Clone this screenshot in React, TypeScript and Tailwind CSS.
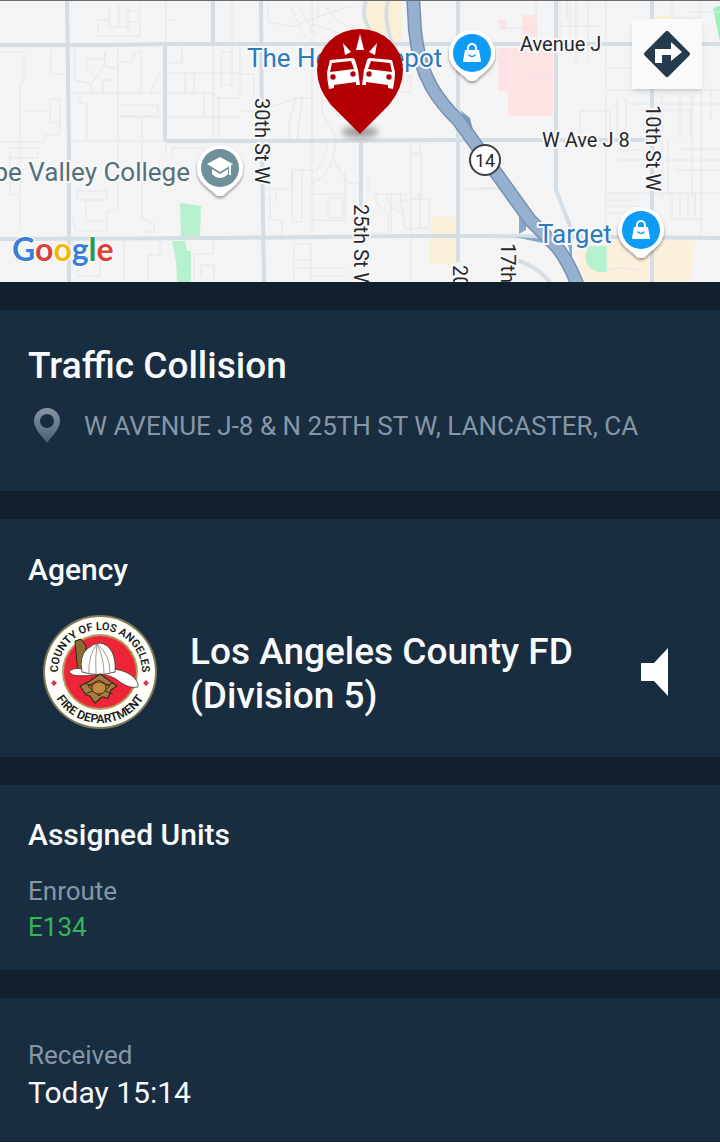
import React from "react";

const mapFont = "Roboto, 'Noto Sans', sans-serif";

// Local streets, drawn as hairlines under the main roads
const smallRoads = [
  "M109 5V27M98 20H109M98 20V36H140M119 5V27M128 5V36M140 5V36M109 27H128M128 11H140M128 22H140",
  "M0 52H24V82H20V231M51 50V74H64M0 142H43L46 135H60V115M24 111H50M50 99H60V123H50ZM10 148H38V158H10ZM10 158V195H20",
  "M75 48V80L91 84M87 59H103L106 50M87 59V70L95 76M91 92V84L104 66L106 50M104 66L116 69M103 92V80H116M118 48V140M118 62H132L135 52H142M141 52V92M151 92L153 86L160 73",
  "M73 93H165M80 93V103H87V139M69 141H165M120 105H158V116H120M120 117H165M142 117V139M118 142V208L107 212V231H76L72 218M77 191H107V200H77ZM86 200V221H107M142 142V218L154 224V232H145M77 270V276H100V245M124 240V282M148 282V255H160V240",
  "M166 0V45M168 20H174M166 63H182V46M166 73H240M213 46V140M185 73V93M194 73V93M166 93H213L219 98V140M204 93V117M166 117H240M213 98H240M232 0V86M232 52H221V85H232M240 45V97M166 142V155M172 155V148H205V155M194 282V254H213V240M201 277V265H214V282",
  "M268 3V22L292 27L315 18L350 6M290 6L306 38M298 5L316 36M324 5C336 22 348 28 356 30M312 24C326 28 340 31 348 44M312 0V140M318 0V18",
  "M240 74H254V98M240 111H258M266 108L280 104L296 98H310M296 98L289 122V139M302 98L297 139M322 46V110C325 120 332 126 336 140M312 76V240M326 100L340 118",
  "M266 189H292V170H311M292 171V222H302V170M311 183C324 180 334 165 336 141M311 173C324 168 327 150 327 141M334 160L347 183H361M312 194H344M328 198V218H343V198ZM345 172V221L312 220M270 189V219L282 221V240M276 190V200H266",
  "M294 244H311V282M294 244V282M294 268H344V276H311M294 260H311M368 176V194M374 194H411M376 194V203L388 213V233H372M386 194C388 205 395 210 405 215M400 200H411L420 194M391 194V233M400 194L405 229L429 228V199H411",
  "M411 142V282M411 153H421V199H411M420 142V153M400 76H411V92H400M458 189H500M420 228V194",
  "M500 28H540M526 78L552 76M536 0V40M560 0V42M567 0V20M570 0V40M560 26H600M576 0V62M588 0V62M606 0V90M606 68H632M580 111H610V140M580 111V138M606 92V240M606 90H720M628 104H720",
  "M617 100V138M626 98V140M640 110H691V138M662 95V200M680 93V140M692 95V198M701 90V236M711 90V120M668 140V195M617 150H658M617 160H680M606 193H720M606 200H640M606 206H640M606 213H640M672 193V219H702M680 193V216M688 193V216M695 193V216",
  "M672 0V18H700V0M680 16V45M690 12H720M640 28H632M700 40V20M676 170H720M676 160H720M680 149H720M606 228V270L622 268L640 270M500 160V190M480 188H520",
];

const mainRoads = [
  "M67 0L69 150V282",
  "M0 45L110 45L166 44L720 44",
  "M213 0V44",
  "M165 45V139Q165 141 169 141L240 141L458 140H660",
  "M261 0L262 150L264 282",
  "M361 141V237",
  "M458 0V262",
  "M556 0V190L570 226V237",
  "M652 0V282",
  "M0 239L220 238L410 236L480 236L600 237L720 238",
  "M366 0C362 12 364 20 370 30M388 0C384 18 388 30 392 44",
];

// Shared body for the three place pins, centred on 0,0
const PlacePin = ({
  x,
  y,
  color,
  children,
}: {
  x: number;
  y: number;
  color: string;
  children: React.ReactNode;
}) => (
  <g transform={`translate(${x} ${y})`}>
    <path
      d="M0 28C-3 28 -4 27 -7 24C-11 20 -23 14 -23 0A23 23 0 1 1 23 0C23 14 11 20 7 24C4 27 3 28 0 28Z"
      fill="#fff"
      filter="url(#pinShadow)"
    />
    <circle r="19" fill={color} />
    {children}
  </g>
);

const ShoppingBag = () => (
  <g>
    <path d="M-7 -3H7L9 8Q9 9 8 9H-8Q-9 9 -9 8Z" fill="#fff" />
    <path
      d="M-4 -2V-5A4 4 0 0 1 4 -5V-2"
      fill="none"
      stroke="#fff"
      strokeWidth="2"
    />
    <path
      d="M-3 2Q0 5 3 2"
      fill="none"
      stroke="#0f9cf7"
      strokeWidth="1.6"
      strokeLinecap="round"
    />
  </g>
);

const CollisionCar = () => (
  <g>
    <path
      d="M330 60L352 58Q354 58 355 60L358 70Q359 78 360 85H356V82L334 85V88L329 89Q327 80 327 72Z"
      fill="#fff"
    />
    <path d="M332 63L351 61L354 69L330 72Z" fill="#b20003" />
    <circle cx="333" cy="77" r="2.7" fill="#b20003" />
    <circle cx="353" cy="74" r="2.7" fill="#b20003" />
  </g>
);

const IncidentMap = () => (
  <svg
    className="block h-[282px] w-full bg-[#f4f4f5]"
    viewBox="0 0 720 282"
    preserveAspectRatio="xMidYMid slice"
    role="img"
    aria-label="Map"
  >
    <defs>
      <filter id="pinShadow" x="-30%" y="-30%" width="160%" height="170%">
        <feDropShadow dx="0" dy="2" stdDeviation="1.5" floodOpacity="0.4" />
      </filter>
      <filter id="groundShadow" x="-30%" y="-60%" width="160%" height="220%">
        <feGaussianBlur stdDeviation="3" />
      </filter>
    </defs>

    {/* Land use areas */}
    <path d="M180 203L201 206L200 236H181Z" fill="#b5f0cf" />
    <path d="M172 241H185L187 251H191V282H177Q177 260 172 241Z" fill="#b5f0cf" />
    <path d="M364 0H402V44H392L387 34L364 30Z" fill="#fbefd6" />
    <path d="M431 217H457V264H429Z" fill="#faf0d9" />
    <path
      d="M522 15H537V37H522ZM497 20H506V30H501ZM498 48H553V116H508V91H498Z"
      fill="#fde3e3"
    />
    <path d="M574 240H695L690 282H584Z" fill="#fcf0dc" />
    <path d="M590 246H607V272Q594 274 587 264Q583 252 590 246Z" fill="#b5f0cf" />
    <path d="M713 8L720 6V42Z" fill="#9ff0bd" />
    <path d="M655 16H672V20H655Z" fill="#fbefd6" />

    <g fill="none" stroke="#e4e6ea" strokeWidth="1">
      {smallRoads.map((d) => (
        <path key={d} d={d} />
      ))}
    </g>
    <g fill="none" stroke="#d5dee5" strokeWidth="4">
      {mainRoads.map((d) => (
        <path key={d} d={d} />
      ))}
    </g>
    <path
      d="M515 260Q534 264 550 282"
      fill="none"
      stroke="#d5dee5"
      strokeWidth="4"
    />

    {/* Freeway with its ramps */}
    <path
      d="M519 205L526 215V230L519 234V205ZM515 237L550 239L556 246ZM566 236H572V262Z"
      fill="#8ba7c7"
    />
    <path d="M460 110L470 118L474 134Z" fill="#7d98b9" />
    <path
      d="M413 -4L415 30Q418 62 431 86Q442 105 458 120L484 156L530 220L556 246Q568 260 578 286"
      fill="none"
      stroke="#7891b1"
      strokeWidth="14"
    />
    <path
      d="M413 -4L415 30Q418 62 431 86Q442 105 458 120L484 156L530 220L556 246Q568 260 578 286"
      fill="none"
      stroke="#96b0d0"
      strokeWidth="11"
    />

    {/* Street and place names */}
    <g
      fontFamily={mapFont}
      stroke="#f8f8f8"
      strokeWidth="4"
      strokeLinejoin="round"
      paintOrder="stroke"
    >
      <g fontSize="20" fill="#26282b">
        <text x="520" y="51">Avenue J</text>
        <text x="542" y="147">W Ave J 8</text>
        <text transform="translate(255 98) rotate(90)">30th St W</text>
        <text transform="translate(354 204) rotate(90)">25th St W</text>
        <text transform="translate(453 265) rotate(90)">20</text>
        <text transform="translate(501 243) rotate(90)">17th</text>
        <text transform="translate(646 105) rotate(90)">10th St W</text>
      </g>
      <g fontSize="26">
        <text x="247" y="67" fill="#2b7bbf">The Home Depot</text>
        <text x="538" y="243" fill="#2b7bbf">Target</text>
        <text x="190" y="181" fill="#54707b" textAnchor="end">
          pe Valley College
        </text>
      </g>
    </g>

    <circle cx="485" cy="160" r="15" fill="#fff" stroke="#3c4043" strokeWidth="2" />
    <text
      x="485"
      y="167"
      fontSize="18"
      textAnchor="middle"
      fontFamily={mapFont}
      fill="#26282b"
    >
      14
    </text>

    <PlacePin x={472} y={53} color="#0f9cf7">
      <ShoppingBag />
    </PlacePin>
    <PlacePin x={641} y={230} color="#0f9cf7">
      <ShoppingBag />
    </PlacePin>
    <PlacePin x={220} y={168} color="#6f909b">
      <path d="M-13 -4L0 -11L13 -4L0 4Z" fill="#fff" />
      <path d="M-8 1L0 6L8 1V6Q0 14 -8 6Z" fill="#fff" />
      <path d="M10 -4V7" stroke="#fff" strokeWidth="2" />
    </PlacePin>

    {/* Incident marker */}
    <ellipse
      cx="360"
      cy="132"
      rx="18"
      ry="6"
      fill="#000"
      opacity="0.35"
      filter="url(#groundShadow)"
    />
    <path
      d="M360 134L331 105Q317 88 317 70A43 41 0 0 1 403 70Q403 88 389 105Z"
      fill="#b20003"
    />
    <path
      d="M360 34L364 50H356ZM343 43L351 52L345 55ZM377 43L375 55L369 52Z"
      fill="#fff"
    />
    <CollisionCar />
    <g transform="translate(722 0) scale(-1 1)">
      <CollisionCar />
    </g>

    <text
      x="12"
      y="261"
      fontFamily="Lato, sans-serif"
      fontSize="32"
      fontWeight="700"
      stroke="#fff"
      strokeWidth="2"
      paintOrder="stroke"
    >
      <tspan fill="#3c7fd9">G</tspan>
      <tspan fill="#d9433a">o</tspan>
      <tspan fill="#f0b90a">o</tspan>
      <tspan fill="#3c7fd9">g</tspan>
      <tspan fill="#1f9d55">l</tspan>
      <tspan fill="#d9433a">e</tspan>
    </text>
    <path d="M0 0H720V1H0Z" fill="#6b6d72" />
  </svg>
);

const AgencySeal = () => (
  <svg
    className="h-[116px] w-[116px] shrink-0"
    viewBox="-58 -58 116 116"
    role="img"
    aria-label="Agency seal"
  >
    <defs>
      <path id="sealTop" d="M-41 9A42 42 0 1 1 41 9" />
      <path id="sealBottom" d="M-51 0A51 51 0 0 0 51 0" />
    </defs>
    <circle r="57" fill="#827b55" />
    <circle r="55" fill="#fffef8" />
    <circle r="38" fill="#b39c5e" />
    <circle r="36" fill="#ee2438" />
    <g
      fontFamily="Roboto, sans-serif"
      fontWeight="600"
      fill="#1b1b1b"
      textAnchor="middle"
    >
      <text fontSize="11">
        <textPath href="#sealTop" startOffset="50%">
          COUNTY OF LOS ANGELES
        </textPath>
      </text>
      <text fontSize="12">
        <textPath href="#sealBottom" startOffset="50%">
          FIRE DEPARTMENT
        </textPath>
      </text>
    </g>
    <path d="M-46 8L-43 11L-46 14L-49 11ZM46 8L49 11L46 14L43 11Z" fill="#d8344b" />
    {/* Helmet */}
    <path d="M-25 -31L-19 -33L-14 -26L-16 2H-22Z" fill="#8d6b35" stroke="#2c2214" />
    <path
      d="M-31 0Q-27 -5 -18 -3H10Q22 -3 31 3Q39 9 38 15Q30 17 20 10Q12 3 0 2Q-16 5 -27 3Z"
      fill="#fff"
      stroke="#4a3a2a"
      strokeWidth="0.8"
    />
    <path
      d="M-18 0Q-21 -16 -13 -23Q-6 -29 0 -29Q8 -28 12 -20Q16 -12 15 0Q-2 5 -18 0Z"
      fill="#fff"
      stroke="#3c3328"
      strokeWidth="0.8"
    />
    <path
      d="M-3 -28Q-12 -16 -11 1M-3 -28Q-5 -14 -4 2M-3 -28Q4 -14 4 2M-3 -28Q10 -18 10 1"
      fill="none"
      stroke="#8a8172"
      strokeWidth="0.8"
    />
    {/* Badge */}
    <path
      d="M0 2L17 14L11 18L8 26L2 25L-5 31L-10 24L-14 23L-20 14L-10 9Z"
      fill="#a57c42"
      stroke="#3b2a16"
      strokeWidth="1.2"
    />
    <path
      d="M-16 11L13 22M13 11L-15 22M-12 14L-1 8L10 14L-1 24Z"
      fill="none"
      stroke="#3b2a16"
      strokeWidth="1"
    />
    <ellipse cx="-1" cy="16" rx="7" ry="6" fill="#c08a45" stroke="#5a2b18" />
  </svg>
);

const Card = ({
  className,
  children,
}: {
  className: string;
  children: React.ReactNode;
}) => (
  <section className={`bg-[#182d40] px-7 ${className}`}>{children}</section>
);

const App = () => {
  return (
    <main className="flex min-h-screen flex-col gap-7 bg-[#12202d] font-[Roboto,sans-serif] text-[#f8fafb]">
      <div className="relative">
        <IncidentMap />
        <button
          type="button"
          aria-label="Directions"
          className="absolute top-[19px] right-[18px] flex size-[70px] items-center justify-center bg-[#fafafa]/95 shadow-md"
        >
          <svg className="size-12" viewBox="0 0 48 48">
            <path
              d="M22.500 1.600Q24 .1 25.500 1.600L46.400 22.500Q47.900 24 46.400 25.500L25.500 46.400Q24 47.900 22.500 46.400L1.600 25.500Q.1 24 1.600 22.500Z"
              fill="#263b4d"
            />
            <path d="M12 33V19H28V12L39 22L28 31V25H19V33Z" fill="#fff" />
          </svg>
        </button>
      </div>

      <Card className="pt-[33px] pb-11">
        <h1 className="text-[37px] leading-[46px] font-medium">
          Traffic Collision
        </h1>
        <div className="mt-4 flex items-center gap-5">
          <svg className="ml-1 h-9 w-8 shrink-0" viewBox="0 0 32 36">
            <defs>
              <linearGradient id="pinFill" x1="0" y1="0" x2="0" y2="1">
                <stop offset="0" stopColor="#8796a3" />
                <stop offset="1" stopColor="#4c6072" />
              </linearGradient>
            </defs>
            <path
              d="M15 0A13 13 0 0 1 28 13C28 21 20 28 15 35C10 28 2 21 2 13A13 13 0 0 1 15 0ZM15 6A7 7 0 1 0 15 20A7 7 0 1 0 15 6Z"
              fill="url(#pinFill)"
              fillRule="evenodd"
            />
          </svg>
          <p className="text-[26px] leading-[42px] text-[#8796a5]">
            W AVENUE J-8 &amp; N 25TH ST W, LANCASTER, CA
          </p>
        </div>
      </Card>

      <Card className="pt-[33px] pb-[27px]">
        <h2 className="text-[30px] leading-9 font-medium">Agency</h2>
        <div className="mt-[26px] flex items-center pr-5 pl-3.5">
          <AgencySeal />
          <p className="ml-8 flex-1 pt-1 text-[37px] leading-11 font-medium">
            Los Angeles County FD
            <br />
            (Division 5)
          </p>
          <button type="button" aria-label="Play audio" className="shrink-0">
            <svg className="h-12 w-8" viewBox="0 0 32 48">
              <path d="M1 15H14L28 0V48L14 33H1Z" fill="#fff" />
            </svg>
          </button>
        </div>
      </Card>

      <Card className="pt-8 pb-[25px]">
        <h2 className="text-[30px] leading-9 font-medium">Assigned Units</h2>
        <p className="mt-5 text-[26px] leading-9 text-[#8796a5]">Enroute</p>
        <p className="text-[26px] leading-9 text-[#34b556]">E134</p>
      </Card>

      <Card className="pt-[39px] pb-7">
        <p className="text-[26px] leading-9 text-[#8796a5]">Received</p>
        <p className="text-[30px] leading-10">Today 15:14</p>
      </Card>
    </main>
  );
};

export default App;
